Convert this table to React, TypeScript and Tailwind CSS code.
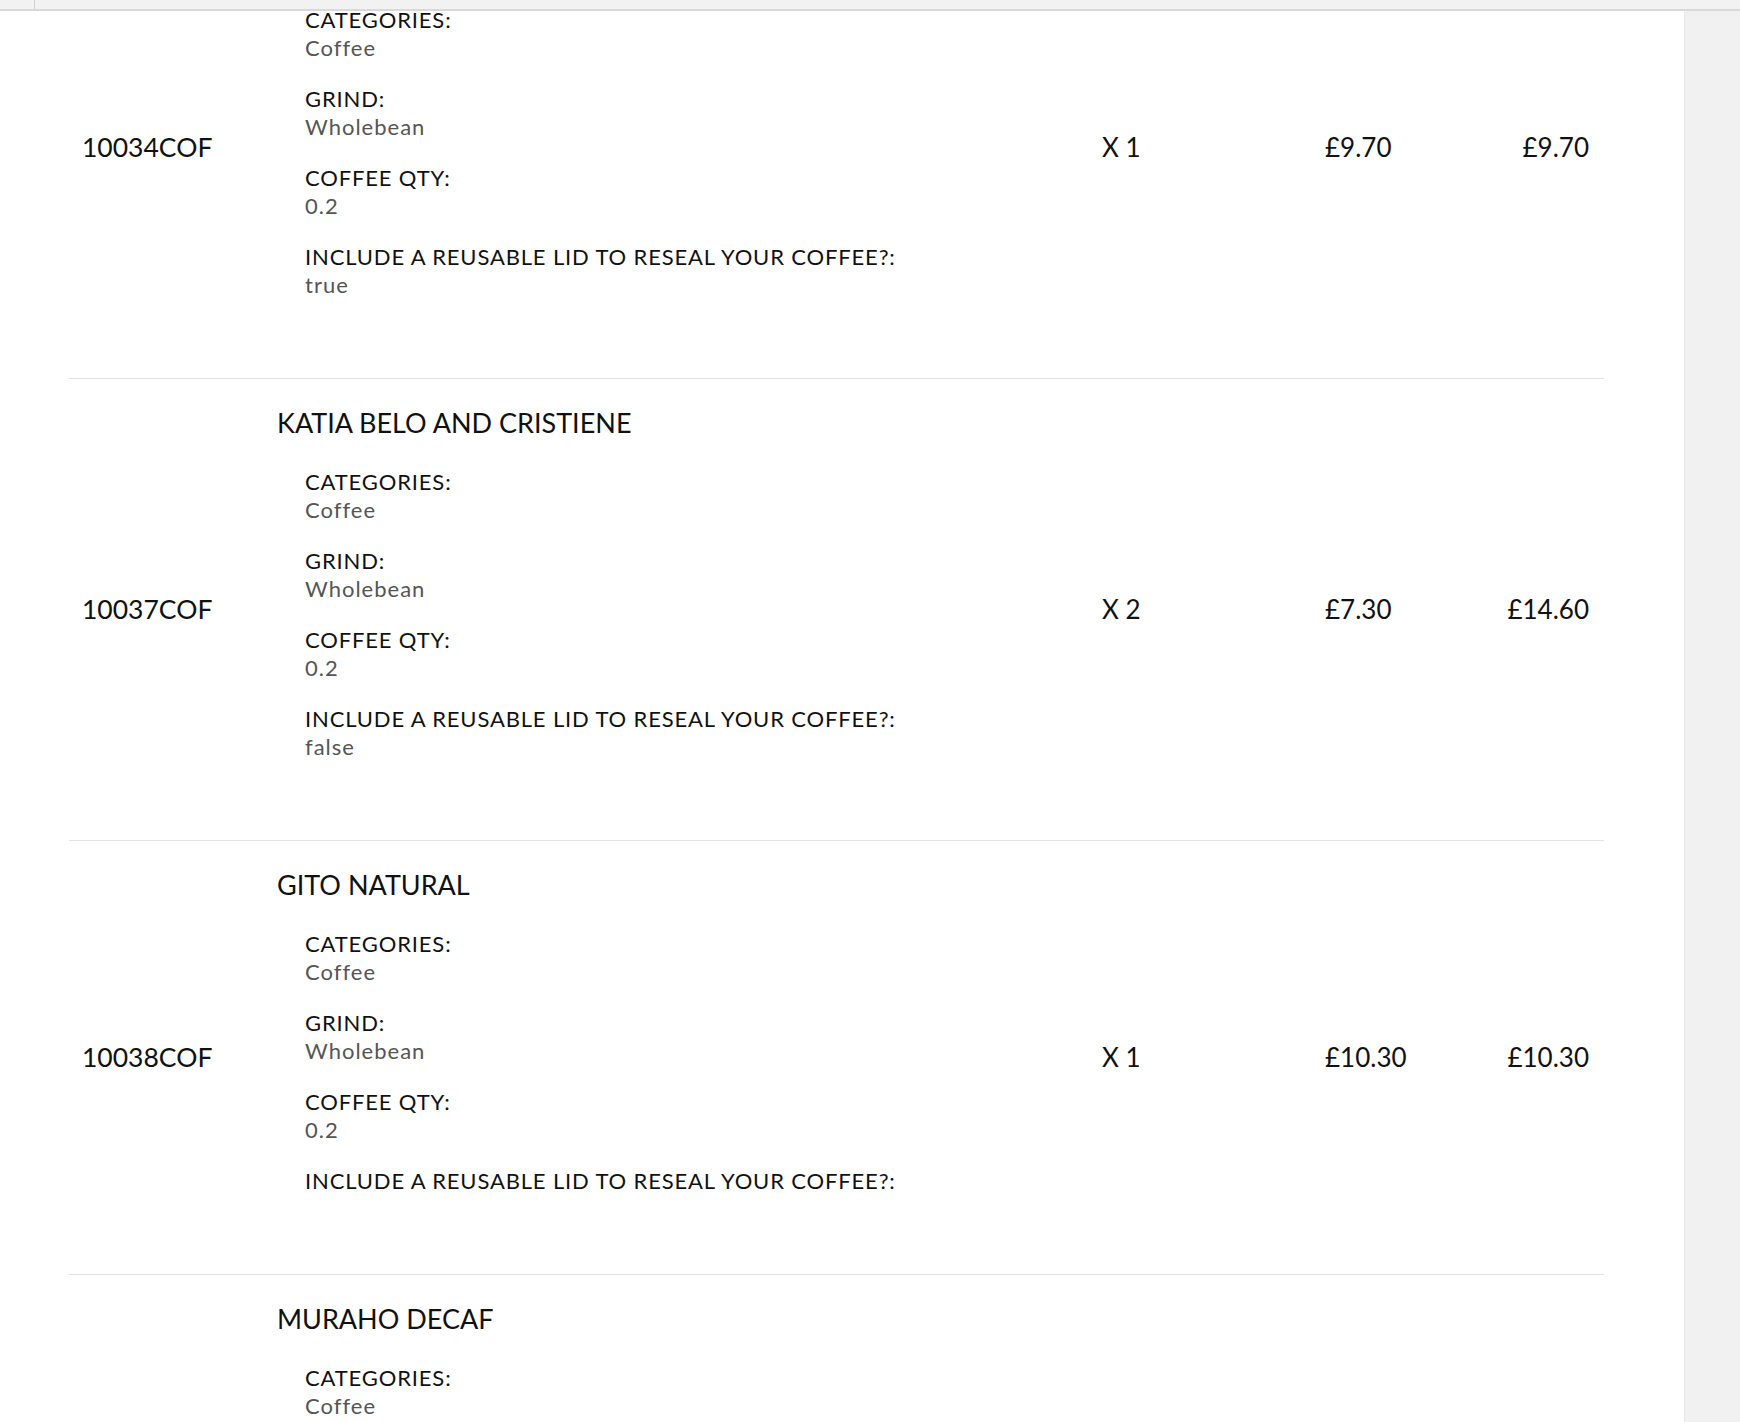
import React from "react";

type Item = {
  sku: string;
  name: string;
  attrs: { label: string; value: string }[];
  qty: number;
  price: string;
  total: string;
};

const items: Item[] = [
  {
    sku: "10034COF",
    name: "KAYON MOUNTAIN",
    attrs: [
      { label: "CATEGORIES:", value: "Coffee" },
      { label: "GRIND:", value: "Wholebean" },
      { label: "COFFEE QTY:", value: "0.2" },
      { label: "INCLUDE A REUSABLE LID TO RESEAL YOUR COFFEE?:", value: "true" },
    ],
    qty: 1,
    price: "£9.70",
    total: "£9.70",
  },
  {
    sku: "10037COF",
    name: "KATIA BELO AND CRISTIENE",
    attrs: [
      { label: "CATEGORIES:", value: "Coffee" },
      { label: "GRIND:", value: "Wholebean" },
      { label: "COFFEE QTY:", value: "0.2" },
      { label: "INCLUDE A REUSABLE LID TO RESEAL YOUR COFFEE?:", value: "false" },
    ],
    qty: 2,
    price: "£7.30",
    total: "£14.60",
  },
  {
    sku: "10038COF",
    name: "GITO NATURAL",
    attrs: [
      { label: "CATEGORIES:", value: "Coffee" },
      { label: "GRIND:", value: "Wholebean" },
      { label: "COFFEE QTY:", value: "0.2" },
      { label: "INCLUDE A REUSABLE LID TO RESEAL YOUR COFFEE?:", value: "" },
    ],
    qty: 1,
    price: "£10.30",
    total: "£10.30",
  },
  {
    sku: "10041COF",
    name: "MURAHO DECAF",
    attrs: [
      { label: "CATEGORIES:", value: "Coffee" },
      { label: "GRIND:", value: "Wholebean" },
      { label: "COFFEE QTY:", value: "0.2" },
      { label: "INCLUDE A REUSABLE LID TO RESEAL YOUR COFFEE?:", value: "true" },
    ],
    qty: 1,
    price: "£8.90",
    total: "£8.90",
  },
];

function Row({ item }: { item: Item }) {
  return (
    <div className="grid grid-cols-[195px_825px_223px_158px_1fr] items-center border-b border-[#e3e3e3]">
      <div className="pl-[13px] text-[26.5px] text-[#111]">{item.sku}</div>
      <div className="pt-[28px] pb-[56px] pl-[13px]">
        <div className="text-[27px] leading-[32px] text-[#111]">{item.name}</div>
        <div className="mt-[29px] pl-[28px]">
          {item.attrs.map((a) => (
            <div key={a.label} className="mb-[23px]">
              <div className="text-[22px] leading-[28px] tracking-[0.85px] text-[#111]">
                {a.label}
              </div>
              {a.value && (
                <div className="text-[22px] leading-[28px] tracking-[1px] text-[#555]">
                  {a.value}
                </div>
              )}
            </div>
          ))}
        </div>
      </div>
      <div className="pl-[13px] text-[26px] text-[#111]">X {item.qty}</div>
      <div className="pl-[13px] text-[26px] text-[#111]">{item.price}</div>
      <div className="pr-[15px] text-right text-[26px] text-[#111]">{item.total}</div>
    </div>
  );
}

export default function App() {
  return (
    <div
      className="flex h-[1422px] flex-col overflow-hidden bg-white"
      style={{ fontFamily: "Lato, 'Liberation Sans', sans-serif" }}
    >
      <div className="relative z-10 h-[11px] shrink-0 border-b-2 border-[#d9d9d9] bg-[#f2f2f2]">
        <div className="ml-[34px] h-full w-px bg-[#d2d2d2]" />
      </div>
      <div className="flex min-h-0 flex-1">
        <div className="min-w-0 flex-1 overflow-hidden">
          <div className="-mt-[94px] ml-[69px] w-[1535px]">
            {items.map((it) => (
              <Row key={it.sku} item={it} />
            ))}
          </div>
        </div>
        <div className="w-[56px] shrink-0 border-l border-[#e9e9e9] bg-[#f1f1f1]" />
      </div>
    </div>
  );
}
